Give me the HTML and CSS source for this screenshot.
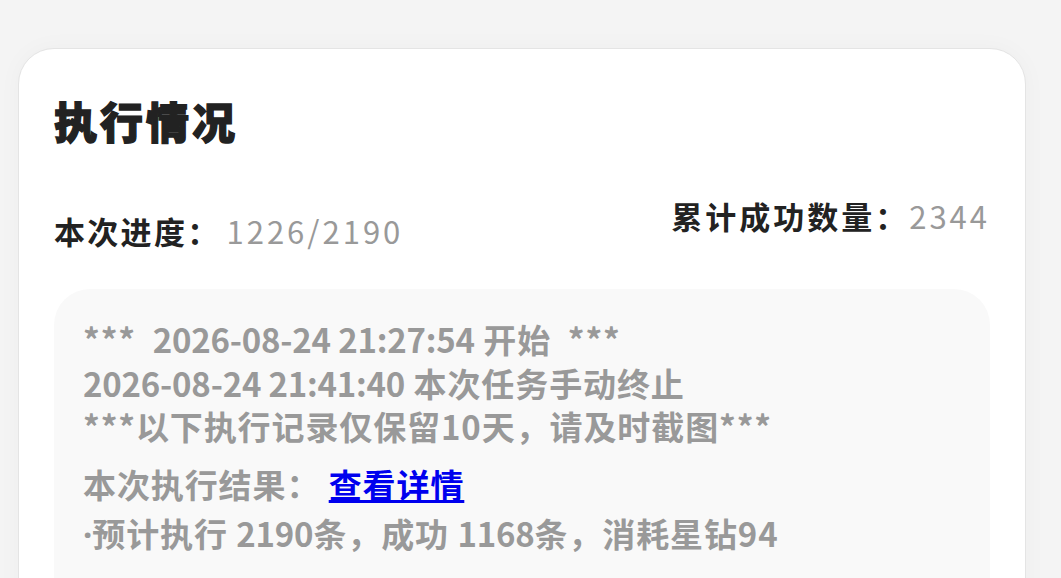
FILE: index.html
```html
<!DOCTYPE html>
<html lang="zh-CN">
<head>
<meta charset="utf-8">
<title>执行情况</title>
<link rel="stylesheet" href="styles.css">
</head>
<body>
<div class="page">
  <section class="card">
    <h1 class="title">执行情况</h1>
    <div class="stats">
      <div class="stat stat-left"><span class="label">本次进度：</span><span class="value">1226/2190</span></div>
      <div class="stat stat-right"><span class="label">累计成功数量：</span><span class="value">2344</span></div>
    </div>
    <div class="log">
      <p class="log-lines">***&nbsp; <span class="num">2026-08-24 21:27:54</span> 开始&nbsp; ***<br><span class="num">2026-08-24 21:41:40</span> 本次任务手动终止<br>***以下执行记录仅保留10天，请及时截图***</p>
      <p class="log-result">本次执行结果： <a class="link" href="#">查看详情</a></p>
      <p class="log-summary"><span class="dot">·</span>预计执行 <span class="num">2190</span>条，成功 <span class="num">1168</span>条，消耗星钻94</p>
    </div>
  </section>
</div>
</body>
</html>
```

FILE: styles.css
```css
html, body {
  margin: 0;
  padding: 0;
  background: #f4f4f4;
  font-family: "Noto Sans CJK SC", "Noto Sans", sans-serif;
}
.page {
  padding: 48px 35px 0 18px;
  height: 578px;
  box-sizing: border-box;
  overflow: hidden;
}
.card {
  background: #ffffff;
  border: 1px solid #e4e4e4;
  border-radius: 36px;
  padding: 40px 35px 40px 35px;
  min-height: 700px;
  box-shadow: 0 0 24px rgba(0,0,0,0.03);
}
.title {
  margin: 0;
  font-family: "Noto Sans CJK SC Black", "Noto Sans CJK SC", sans-serif;
  font-size: 43px;
  line-height: 62px;
  font-weight: 900;
  color: #222222;
  letter-spacing: 3px;
  -webkit-text-stroke: 1.3px #222222;
}
.stats {
  display: flex;
  justify-content: space-between;
  align-items: flex-start;
  margin-top: 43px;
}
.stat {
  font-size: 31px;
  line-height: 44px;
  letter-spacing: 2.3px;
}
.stat-left {
  padding-top: 15px;
}
.stat-right .label {
  letter-spacing: 3px;
}
.label {
  font-weight: 700;
  color: #222222;
}
.value {
  color: #999999;
  font-weight: 400;
  letter-spacing: 3px;
}
.stat-left .value {
  margin-left: 6px;
}
.log {
  margin-top: 36px;
  background: #f9f9f9;
  border-radius: 36px;
  padding: 29px 29px;
  min-height: 400px;
  color: #999999;
  font-size: 33px;
  font-weight: 700;
  letter-spacing: 0.9px;
}
.log p {
  margin: 0;
}
.num {
  letter-spacing: -0.2px;
}
.log-lines {
  line-height: 43.5px;
}
.log-result {
  margin-top: 13px !important;
  line-height: 44px;
}
.log-summary {
  margin-top: 5px !important;
  line-height: 44px;
}
.dot {
  font-family: "Noto Sans", sans-serif;
  letter-spacing: 0;
}
.link {
  color: #0000ee;
  text-decoration: underline;
  font-weight: 700;
}
```
